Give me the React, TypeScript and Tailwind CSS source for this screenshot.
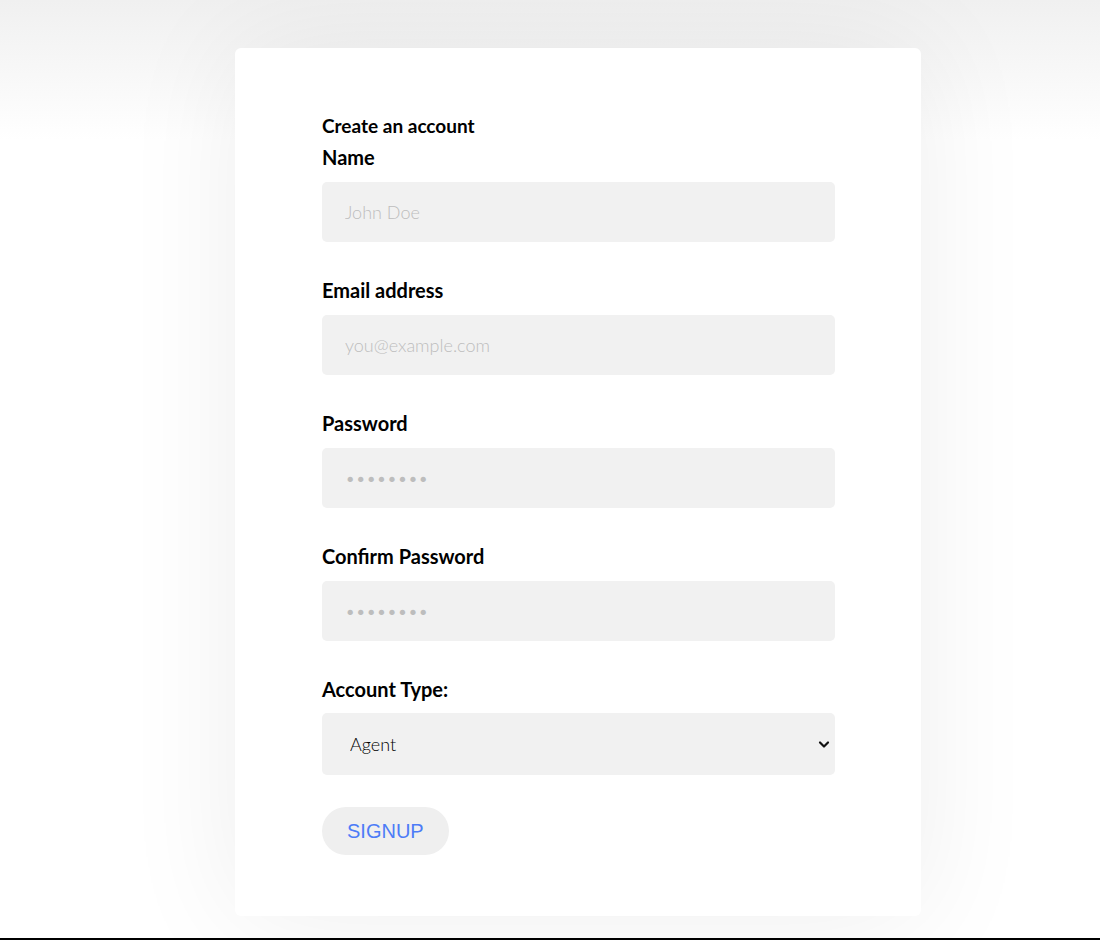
import { useState } from "react";

function Field({ label, type, placeholder }: { label: string; type: string; placeholder: string }) {
  return (
    <div className="mb-[36px]">
      <label className="block h-6 mb-[13px] text-[20px] leading-6 font-bold text-black">{label}</label>
      <input
        type={type}
        placeholder={placeholder}
        className="block w-full h-[60px] rounded-[5px] bg-[#f1f1f1] px-[23px] text-[18px] font-light text-black outline-none placeholder:text-[#bdbdbd]"
      />
    </div>
  );
}

export default function App() {
  const [accountType, setAccountType] = useState("agent");

  return (
    <div
      className="relative w-full h-[940px] overflow-hidden bg-white bg-gradient-to-b from-[#f0f0f0] to-white to-[140px] bg-no-repeat"
      style={{ fontFamily: "Lato, 'Noto Sans', sans-serif" }}
    >
      <div className="flex pl-[235px] pt-[48px]">
        <div className="w-[686px] h-[868px] rounded-[6px] bg-white pl-[87px] pr-[86px] pt-[67px] shadow-[0_0_120px_rgba(0,0,0,0.07)]">
          <h2 className="h-[22px] mb-[8px] text-[19px] leading-[22px] font-bold text-black">Create an account</h2>

          {/* form fields */}
          <Field label="Name" type="text" placeholder="John Doe" />
          <Field label="Email address" type="email" placeholder="you@example.com" />
          <Field label="Password" type="password" placeholder="••••••••" />
          <Field label="Confirm Password" type="password" placeholder="••••••••" />

          <div className="mb-[32px]">
            <label className="block h-6 mb-[12px] text-[20px] leading-6 font-bold text-black">Account Type:</label>
            <div className="relative">
              <select
                value={accountType}
                onChange={e => setAccountType(e.target.value)}
                className="block w-full h-[62px] appearance-none rounded-[5px] bg-[#f1f1f1] pl-[28px] text-[18px] font-light text-black outline-none"
              >
                <option value="agent">Agent</option>
                <option value="client">Client</option>
              </select>
              <svg
                className="pointer-events-none absolute right-[5px] top-[27px]"
                width="12"
                height="9"
                viewBox="0 0 12 9"
                fill="none"
              >
                <path d="M2 2.5l4 4 4-4" stroke="#111" strokeWidth="2.2" strokeLinecap="round" strokeLinejoin="round" />
              </svg>
            </div>
          </div>

          <button
            className="h-[48px] w-[127px] rounded-full bg-[#efefef] text-left pl-[25px] text-[20px] text-[#4d7cf7]"
            style={{ fontFamily: "'Liberation Sans', Arial, sans-serif" }}
          >
            SIGNUP
          </button>
        </div>
      </div>
      <div className="absolute bottom-0 left-0 right-0 h-[2px] bg-black" />
    </div>
  );
}
